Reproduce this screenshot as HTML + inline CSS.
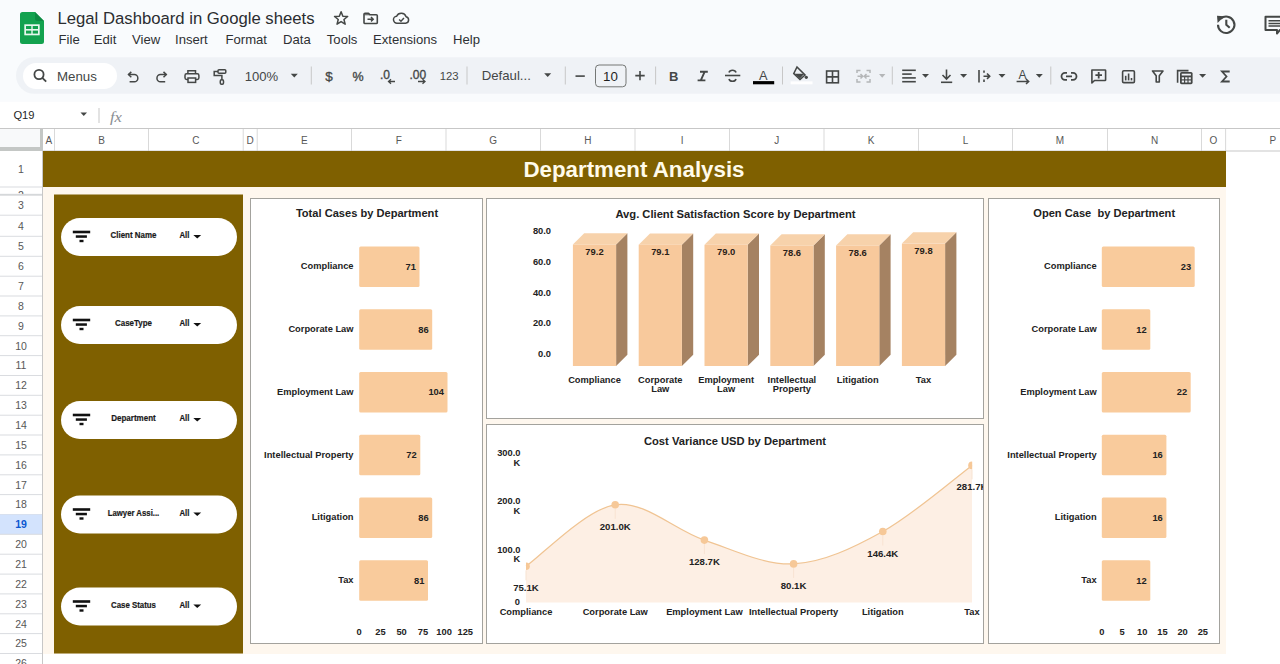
<!DOCTYPE html><html><head><meta charset="utf-8"><style>html,body{margin:0;padding:0;width:1280px;height:664px;overflow:hidden;background:#fff}</style></head><body><svg width="1280" height="664" viewBox="0 0 1280 664" style="display:block;font-family:'Liberation Sans', sans-serif"><rect x="0" y="0" width="1280" height="664" fill="#ffffff"/><rect x="0" y="0" width="1280" height="128" fill="#f9fbfd"/><g transform="translate(20,12)"><path d="M2.5 0 H15 L24 9 V29.5 A2.5 2.5 0 0 1 21.5 32 H2.5 A2.5 2.5 0 0 1 0 29.5 V2.5 A2.5 2.5 0 0 1 2.5 0Z" fill="#13a24f"/><path d="M15 0 L24 9 H17.5 A2.5 2.5 0 0 1 15 6.5Z" fill="#0d8a42"/><rect x="4.3" y="12.3" width="15.4" height="11" fill="#e8f7ee"/><rect x="6" y="14" width="5.3" height="3" fill="#13a24f"/><rect x="12.7" y="14" width="5.3" height="3" fill="#13a24f"/><rect x="6" y="18.6" width="5.3" height="3" fill="#13a24f"/><rect x="12.7" y="18.6" width="5.3" height="3" fill="#13a24f"/></g><text x="57.5" y="24.3" font-size="16.7" fill="#2b2d30">Legal Dashboard in Google sheets</text><path d="M341.10 11.70 L342.86 16.17 L347.66 16.47 L343.95 19.53 L345.16 24.18 L341.10 21.60 L337.04 24.18 L338.25 19.53 L334.54 16.47 L339.34 16.17Z" fill="none" stroke="#444746" stroke-width="1.5" stroke-linejoin="round"/><g fill="none" stroke="#444746" stroke-width="1.6"><path d="M364 14.2 A1 1 0 0 1 365 13.3 H368.5 L370 14.8 H376.3 A1 1 0 0 1 377.3 15.8 V22.6 A1 1 0 0 1 376.3 23.5 H365 A1 1 0 0 1 364 22.6Z" stroke-linejoin="round"/></g><path d="M364.3 14.3 H369 L370 15.3 H364.3Z" fill="#444746"/><path d="M367.5 19.2 H373.2 M371 17 L373.2 19.2 L371 21.4" fill="none" stroke="#444746" stroke-width="1.5"/><g transform="translate(392.6,10.6) scale(0.93)" fill="none" stroke="#444746" stroke-width="1.6"><path d="M5 13.5 H14 A3.5 3.5 0 0 0 14.5 6.6 A5.5 5.5 0 0 0 4.3 6.1 A3.7 3.7 0 0 0 5 13.5Z"/><path d="M7 9.6 L9 11.4 L12.2 8"/></g><text x="58.6" y="43.9" font-size="13.1" fill="#2e3033">File</text><text x="93.8" y="43.9" font-size="13.1" fill="#2e3033">Edit</text><text x="132" y="43.9" font-size="13.1" fill="#2e3033">View</text><text x="175" y="43.9" font-size="13.1" fill="#2e3033">Insert</text><text x="225.5" y="43.9" font-size="13.1" fill="#2e3033">Format</text><text x="283" y="43.9" font-size="13.1" fill="#2e3033">Data</text><text x="326.8" y="43.9" font-size="13.1" fill="#2e3033">Tools</text><text x="373" y="43.9" font-size="13.1" fill="#2e3033">Extensions</text><text x="453" y="43.9" font-size="13.1" fill="#2e3033">Help</text><g transform="translate(1216.5,14.5)" fill="none" stroke="#444746" stroke-width="2.1"><path d="M4.2 4.2 A8.2 8.2 0 1 1 1.5 10.2"/><path d="M9.8 5.3 V10.2 L13.2 13.2"/></g><path d="M1217 15.8 L1224.3 16.3 L1217.6 23Z" fill="#444746"/><g fill="none" stroke="#444746" stroke-width="2"><path d="M1265.5 16.8 H1285 V30 H1280 L1277 33.5 V30 H1265.5Z" stroke-linejoin="round"/><path d="M1268.5 20.8 H1282 M1268.5 23.4 H1282 M1268.5 26 H1282" stroke-width="1.5"/></g><rect x="16" y="57.2" width="1300" height="36.6" rx="18.3" fill="#eff2f6"/><rect x="23" y="63" width="94" height="26" rx="13" fill="#ffffff"/><g fill="none" stroke="#444746" stroke-width="1.8"><circle cx="39" cy="74.5" r="4.6"/><path d="M42.3 77.8 L46.2 81.7"/></g><text x="57" y="80.8" font-size="13.3" fill="#444746">Menus</text><g fill="none" stroke="#444746" stroke-width="1.5"><path d="M128.5 74.6 H134.3 A3.55 3.55 0 0 1 134.3 81.7 H129.6"/><path d="M131.3 71.9 L128.5 74.6 L131.3 77.3"/></g><g fill="none" stroke="#444746" stroke-width="1.5"><path d="M166.3 74.6 H160.5 A3.55 3.55 0 0 0 160.5 81.7 H165.2"/><path d="M163.5 71.9 L166.3 74.6 L163.5 77.3"/></g><g fill="none" stroke="#444746" stroke-width="1.5"><path d="M187.9 73.6 V70.7 H195.5 V73.6"/><rect x="185" y="73.8" width="13.9" height="5.6" rx="1.6"/><rect x="188" y="78" width="7.6" height="4.4" fill="#eff2f6"/></g><g fill="none" stroke="#444746" stroke-width="1.5"><rect x="218" y="69.8" width="7.8" height="3.4" rx="1"/><path d="M218 71.5 H214.2 V75.6 H221.9 V79.6"/><rect x="220.3" y="79.7" width="3.2" height="4.6" rx="1.2"/></g><text x="244.7" y="81.2" font-size="13.1" fill="#444746">100%</text><path d="M290.8 73.7 L297.8 73.7 L294.3 77.5Z" fill="#444746"/><rect x="310.8" y="66.5" width="1" height="18" fill="#c7c7c7"/><text x="329" y="80.5" font-size="13.5" fill="#444746" stroke="#444746" stroke-width="0.3" text-anchor="middle">$</text><text x="358" y="80.5" font-size="12.5" fill="#444746" stroke="#444746" stroke-width="0.35" text-anchor="middle">%</text><text x="380" y="79" font-size="12" fill="#444746" stroke="#444746" stroke-width="0.35">.0</text><path d="M388.5 81.5 H395 M391 79.3 L388.5 81.5 L391 83.7" fill="none" stroke="#444746" stroke-width="1.3"/><text x="409.5" y="79" font-size="12" fill="#444746" stroke="#444746" stroke-width="0.35">.00</text><path d="M418 81.5 H425 M422.5 79.3 L425 81.5 L422.5 83.7" fill="none" stroke="#444746" stroke-width="1.3"/><text x="439.8" y="80.3" font-size="11.3" fill="#444746">123</text><rect x="466.5" y="66.5" width="1" height="18" fill="#c7c7c7"/><text x="481.7" y="80.3" font-size="13.2" fill="#444746">Defaul...</text><path d="M544.2 73.2 L551.2 73.2 L547.7 77Z" fill="#444746"/><rect x="564.8" y="66.5" width="1" height="18" fill="#c7c7c7"/><rect x="575.5" y="75.3" width="9.3" height="1.6" fill="#444746"/><rect x="595.5" y="65" width="30.5" height="21.8" rx="3.5" fill="none" stroke="#747775" stroke-width="1"/><text x="610.5" y="81" font-size="13.3" fill="#1f1f1f" text-anchor="middle">10</text><path d="M635.3 75.6 H644.7 M640 71 V80.2" stroke="#444746" stroke-width="1.6"/><rect x="655.1" y="66.5" width="1" height="18" fill="#c7c7c7"/><text x="673.7" y="80.8" font-size="13" font-weight="bold" fill="#444746" text-anchor="middle">B</text><path d="M700 71.8 H707.8 M697.6 80.4 H705.4 M704.6 71.8 L700.8 80.4" fill="none" stroke="#444746" stroke-width="1.9"/><g fill="none" stroke="#444746" stroke-width="1.6"><path d="M725 75.5 H740.3"/><path d="M736 72.5 A3.6 3 0 0 0 729 72.5 M729 79 A3.6 3 0 0 0 736 79"/></g><text x="763.3" y="79.8" font-size="12.8" fill="#444746" text-anchor="middle">A</text><rect x="753" y="81.1" width="21.2" height="3.2" fill="#000000"/><rect x="782.0" y="66.5" width="1" height="18" fill="#c7c7c7"/><g fill="#444746"><path d="M797 67 L805 75 L800 79.5 L793.8 73.5Z" fill="none" stroke="#444746" stroke-width="1.6"/><path d="M794.5 73.8 H804.3 L800 78.5Z"/><circle cx="806.3" cy="77.3" r="1.6"/></g><rect x="790.6" y="81.4" width="21.9" height="2.9" fill="#ffffff"/><g fill="none" stroke="#444746" stroke-width="1.6"><rect x="826.6" y="71" width="11.8" height="11.8"/><path d="M832.5 71 V82.8 M826.6 76.9 H838.4"/></g><g fill="none" stroke="#b4b6b8" stroke-width="1.5"><path d="M857 73 V70.5 H860.5 M857 79 V82 H860.5 M870 73 V70.5 H866.5 M870 79 V82 H866.5"/><path d="M857.5 76.3 H862.5 M860.5 74 L862.7 76.3 L860.5 78.5 M869.5 76.3 H864.5 M866.5 74 L864.3 76.3 L866.5 78.5"/></g><path d="M879.0 74.0 L885.4000000000001 74.0 L882.2 77.8Z" fill="#b4b6b8"/><rect x="891.8" y="66.5" width="1" height="18" fill="#c7c7c7"/><g fill="#444746"><rect x="902.2" y="69.5" width="13.6" height="1.6"/><rect x="902.2" y="73.3" width="9.5" height="1.6"/><rect x="902.2" y="77.1" width="13.6" height="1.6"/><rect x="902.2" y="80.9" width="13.6" height="1.6"/></g><path d="M922.0 74.0 L929.0 74.0 L925.5 77.8Z" fill="#444746"/><g fill="none" stroke="#444746" stroke-width="1.6"><path d="M946.5 69.5 V79 M942.5 75 L946.5 79 L950.5 75"/><path d="M941 82.3 H952.2"/></g><path d="M960.1 74.0 L967.1 74.0 L963.6 77.8Z" fill="#444746"/><g fill="none" stroke="#444746" stroke-width="1.6"><path d="M979 70 V82.5"/><path d="M983.5 76.2 H989.5 M987 73.5 L989.7 76.2 L987 78.9"/><path d="M984 70.5 V72.8 M984 79.6 V82"/></g><path d="M998.5 74.0 L1005.5 74.0 L1002 77.8Z" fill="#444746"/><text x="1022.5" y="79" font-size="12" fill="#444746" text-anchor="middle">A</text><path d="M1016.6 81.5 H1028.5 M1026 79 L1028.7 81.5 L1026 84" fill="none" stroke="#444746" stroke-width="1.5"/><path d="M1035.8 74.0 L1042.8 74.0 L1039.3 77.8Z" fill="#444746"/><rect x="1050.3" y="66.5" width="1" height="18" fill="#c7c7c7"/><g fill="none" stroke="#444746" stroke-width="1.8"><path d="M1067 72.8 H1065 A3.5 3.5 0 0 0 1065 79.8 H1067 M1071 72.8 H1073 A3.5 3.5 0 0 1 1073 79.8 H1071 M1066 76.3 H1072"/></g><g fill="none" stroke="#444746" stroke-width="1.6"><path d="M1091.9 70 H1105 A0.6 0.6 0 0 1 1105.6 70.6 V79.9 A0.6 0.6 0 0 1 1105 80.5 H1094.5 L1091.9 83 Z" stroke-linejoin="round"/><path d="M1098.7 71.9 V78.5 M1095.4 75.2 H1102" stroke-width="1.8"/></g><g fill="none" stroke="#444746" stroke-width="1.6"><rect x="1122.6" y="70.8" width="11.8" height="11.8" rx="1.2"/></g><g fill="#444746"><rect x="1124.9" y="75.8" width="1.6" height="4.6"/><rect x="1127.8" y="73.5" width="1.6" height="6.9"/><rect x="1130.7" y="78" width="1.6" height="2.4"/></g><path d="M1152.5 71 H1163 L1159.3 75.8 V82 H1156.2 V75.8Z" fill="none" stroke="#444746" stroke-width="1.6" stroke-linejoin="round"/><path d="M1177.6 82.8 V70.6 H1188.5" fill="none" stroke="#444746" stroke-width="1.6"/><rect x="1180" y="72" width="12.6" height="12.2" rx="1.6" fill="#444746"/><g fill="#eff2f6"><rect x="1181.7" y="73.7" width="9.2" height="1.8"/><rect x="1181.8" y="77.3" width="2.2" height="2"/><rect x="1185.2" y="77.3" width="2.2" height="2"/><rect x="1188.6" y="77.3" width="2.2" height="2"/><rect x="1181.8" y="80.5" width="2.2" height="2"/><rect x="1185.2" y="80.5" width="2.2" height="2"/><rect x="1188.6" y="80.5" width="2.2" height="2"/></g><path d="M1199.1 74.0 L1206.1 74.0 L1202.6 77.8Z" fill="#444746"/><path d="M1229.7 71.5 H1222 L1226.5 76.5 L1222 81.5 H1229.7" fill="none" stroke="#444746" stroke-width="1.8"/><rect x="0" y="101.8" width="1280" height="26.2" fill="#ffffff"/><text x="13.4" y="118.5" font-size="11.2" fill="#1f1f1f">Q19</text><path d="M80.5 112.5 H87 L83.75 116Z" fill="#444746"/><rect x="98.5" y="108" width="1" height="15" fill="#c7c7c7"/><text x="110" y="121.5" font-size="15.5" font-style="italic" font-family="Liberation Serif" fill="#8a8e93" textLength="12" lengthAdjust="spacingAndGlyphs">fx</text><rect x="0" y="128" width="1280" height="1" fill="#c7c7c7"/><rect x="0" y="129" width="40" height="18" fill="#f8f9fa"/><rect x="0" y="147" width="43" height="4" fill="#c4c7c5"/><rect x="40" y="129" width="3" height="22" fill="#c4c7c5"/><rect x="54.0" y="129" width="1" height="22" fill="#d9d9d9"/><text x="48.8" y="143.6" font-size="10" fill="#575757" text-anchor="middle">A</text><rect x="148.0" y="129" width="1" height="22" fill="#d9d9d9"/><text x="101.5" y="143.6" font-size="10" fill="#575757" text-anchor="middle">B</text><rect x="242.7" y="129" width="1" height="22" fill="#d9d9d9"/><text x="195.8" y="143.6" font-size="10" fill="#575757" text-anchor="middle">C</text><rect x="256.7" y="129" width="1" height="22" fill="#d9d9d9"/><text x="250.2" y="143.6" font-size="10" fill="#575757" text-anchor="middle">D</text><rect x="351.0" y="129" width="1" height="22" fill="#d9d9d9"/><text x="304.4" y="143.6" font-size="10" fill="#575757" text-anchor="middle">E</text><rect x="445.5" y="129" width="1" height="22" fill="#d9d9d9"/><text x="398.8" y="143.6" font-size="10" fill="#575757" text-anchor="middle">F</text><rect x="540.0" y="129" width="1" height="22" fill="#d9d9d9"/><text x="493.2" y="143.6" font-size="10" fill="#575757" text-anchor="middle">G</text><rect x="634.5" y="129" width="1" height="22" fill="#d9d9d9"/><text x="587.8" y="143.6" font-size="10" fill="#575757" text-anchor="middle">H</text><rect x="729.0" y="129" width="1" height="22" fill="#d9d9d9"/><text x="682.2" y="143.6" font-size="10" fill="#575757" text-anchor="middle">I</text><rect x="823.5" y="129" width="1" height="22" fill="#d9d9d9"/><text x="776.8" y="143.6" font-size="10" fill="#575757" text-anchor="middle">J</text><rect x="918.0" y="129" width="1" height="22" fill="#d9d9d9"/><text x="871.2" y="143.6" font-size="10" fill="#575757" text-anchor="middle">K</text><rect x="1012.0" y="129" width="1" height="22" fill="#d9d9d9"/><text x="965.5" y="143.6" font-size="10" fill="#575757" text-anchor="middle">L</text><rect x="1107.0" y="129" width="1" height="22" fill="#d9d9d9"/><text x="1060.0" y="143.6" font-size="10" fill="#575757" text-anchor="middle">M</text><rect x="1201.0" y="129" width="1" height="22" fill="#d9d9d9"/><text x="1154.5" y="143.6" font-size="10" fill="#575757" text-anchor="middle">N</text><rect x="1225.1" y="129" width="1" height="22" fill="#d9d9d9"/><text x="1213.5" y="143.6" font-size="10" fill="#575757" text-anchor="middle">O</text><rect x="1319.5" y="129" width="1" height="22" fill="#d9d9d9"/><text x="1272.8" y="143.6" font-size="10" fill="#575757" text-anchor="middle">P</text><rect x="43" y="150.5" width="1240" height="1" fill="#c7c7c7"/><rect x="0" y="186.5" width="42" height="1" fill="#dadce0"/><text x="21" y="172.8" font-size="10.5" fill="#575757" text-anchor="middle">1</text><rect x="0" y="193.8" width="42" height="1" fill="#dadce0"/><clipPath id="r2"><rect x="0" y="187" width="42" height="7.1"/></clipPath><text x="21" y="199.1" font-size="10.5" fill="#575757" text-anchor="middle" clip-path="url(#r2)">2</text><rect x="0" y="214.7" width="42" height="1" fill="#dadce0"/><text x="21" y="208.6" font-size="10.5" fill="#575757" text-anchor="middle">3</text><rect x="0" y="235.8" width="42" height="1" fill="#dadce0"/><text x="21" y="229.6" font-size="10.5" fill="#575757" text-anchor="middle">4</text><rect x="0" y="255.8" width="42" height="1" fill="#dadce0"/><text x="21" y="250.1" font-size="10.5" fill="#575757" text-anchor="middle">5</text><rect x="0" y="275.7" width="42" height="1" fill="#dadce0"/><text x="21" y="270.0" font-size="10.5" fill="#575757" text-anchor="middle">6</text><rect x="0" y="295.5" width="42" height="1" fill="#dadce0"/><text x="21" y="289.9" font-size="10.5" fill="#575757" text-anchor="middle">7</text><rect x="0" y="315.4" width="42" height="1" fill="#dadce0"/><text x="21" y="309.8" font-size="10.5" fill="#575757" text-anchor="middle">8</text><rect x="0" y="335.2" width="42" height="1" fill="#dadce0"/><text x="21" y="329.6" font-size="10.5" fill="#575757" text-anchor="middle">9</text><rect x="0" y="355.1" width="42" height="1" fill="#dadce0"/><text x="21" y="349.5" font-size="10.5" fill="#575757" text-anchor="middle">10</text><rect x="0" y="375.0" width="42" height="1" fill="#dadce0"/><text x="21" y="369.3" font-size="10.5" fill="#575757" text-anchor="middle">11</text><rect x="0" y="394.8" width="42" height="1" fill="#dadce0"/><text x="21" y="389.2" font-size="10.5" fill="#575757" text-anchor="middle">12</text><rect x="0" y="414.7" width="42" height="1" fill="#dadce0"/><text x="21" y="409.1" font-size="10.5" fill="#575757" text-anchor="middle">13</text><rect x="0" y="434.5" width="42" height="1" fill="#dadce0"/><text x="21" y="428.9" font-size="10.5" fill="#575757" text-anchor="middle">14</text><rect x="0" y="454.4" width="42" height="1" fill="#dadce0"/><text x="21" y="448.8" font-size="10.5" fill="#575757" text-anchor="middle">15</text><rect x="0" y="474.3" width="42" height="1" fill="#dadce0"/><text x="21" y="468.6" font-size="10.5" fill="#575757" text-anchor="middle">16</text><rect x="0" y="494.1" width="42" height="1" fill="#dadce0"/><text x="21" y="488.5" font-size="10.5" fill="#575757" text-anchor="middle">17</text><rect x="0" y="514.0" width="42" height="1" fill="#dadce0"/><text x="21" y="508.4" font-size="10.5" fill="#575757" text-anchor="middle">18</text><rect x="0" y="514.5" width="42" height="19.9" fill="#d3e3fd"/><rect x="0" y="533.8" width="42" height="1" fill="#dadce0"/><text x="21" y="528.2" font-size="10.5" font-weight="bold" fill="#0b57d0" text-anchor="middle">19</text><rect x="0" y="553.7" width="42" height="1" fill="#dadce0"/><text x="21" y="548.1" font-size="10.5" fill="#575757" text-anchor="middle">20</text><rect x="0" y="573.6" width="42" height="1" fill="#dadce0"/><text x="21" y="567.9" font-size="10.5" fill="#575757" text-anchor="middle">21</text><rect x="0" y="593.4" width="42" height="1" fill="#dadce0"/><text x="21" y="587.8" font-size="10.5" fill="#575757" text-anchor="middle">22</text><rect x="0" y="613.3" width="42" height="1" fill="#dadce0"/><text x="21" y="607.6" font-size="10.5" fill="#575757" text-anchor="middle">23</text><rect x="0" y="633.1" width="42" height="1" fill="#dadce0"/><text x="21" y="627.5" font-size="10.5" fill="#575757" text-anchor="middle">24</text><rect x="0" y="653.0" width="42" height="1" fill="#dadce0"/><text x="21" y="647.4" font-size="10.5" fill="#575757" text-anchor="middle">25</text><rect x="0" y="672.9" width="42" height="1" fill="#dadce0"/><text x="21" y="667.2" font-size="10.5" fill="#575757" text-anchor="middle">26</text><rect x="0" y="194.1" width="42" height="1.6" fill="#d4d6d9"/><rect x="42" y="151" width="1" height="520" fill="#c7c7c7"/><rect x="43" y="151" width="1183" height="36" fill="#7f6000"/><rect x="43" y="187" width="1183" height="467" fill="#fef7ee"/><text x="634" y="177.3" font-size="22.3" font-weight="bold" fill="#fffbea" text-anchor="middle">Department Analysis</text><rect x="54" y="194.5" width="189" height="459" fill="#7f6000"/><rect x="61" y="218" width="176" height="38" rx="19" fill="#ffffff"/><rect x="72.8" y="230.7" width="17.4" height="2.6" fill="#111"/><rect x="75.8" y="235.3" width="11.1" height="2.5" fill="#111"/><rect x="79.5" y="239.8" width="4" height="2.4" fill="#111"/><text x="133.5" y="238.4" font-size="9.2" font-weight="bold" fill="#1a1a1a" stroke="#1a1a1a" stroke-width="0.2" text-anchor="middle" textLength="46" lengthAdjust="spacingAndGlyphs">Client Name</text><text x="179.4" y="238.4" font-size="8.8" font-weight="bold" fill="#1a1a1a" stroke="#1a1a1a" stroke-width="0.2" textLength="10" lengthAdjust="spacingAndGlyphs">All</text><path d="M193.3 234.9 H201.2 L197.25 238.5Z" fill="#111"/><rect x="61" y="306" width="176" height="38" rx="19" fill="#ffffff"/><rect x="72.8" y="318.7" width="17.4" height="2.6" fill="#111"/><rect x="75.8" y="323.3" width="11.1" height="2.5" fill="#111"/><rect x="79.5" y="327.8" width="4" height="2.4" fill="#111"/><text x="133.5" y="326.4" font-size="9.2" font-weight="bold" fill="#1a1a1a" stroke="#1a1a1a" stroke-width="0.2" text-anchor="middle" textLength="37" lengthAdjust="spacingAndGlyphs">CaseType</text><text x="179.4" y="326.4" font-size="8.8" font-weight="bold" fill="#1a1a1a" stroke="#1a1a1a" stroke-width="0.2" textLength="10" lengthAdjust="spacingAndGlyphs">All</text><path d="M193.3 322.9 H201.2 L197.25 326.5Z" fill="#111"/><rect x="61" y="401" width="176" height="38" rx="19" fill="#ffffff"/><rect x="72.8" y="413.7" width="17.4" height="2.6" fill="#111"/><rect x="75.8" y="418.3" width="11.1" height="2.5" fill="#111"/><rect x="79.5" y="422.8" width="4" height="2.4" fill="#111"/><text x="133.5" y="421.4" font-size="9.2" font-weight="bold" fill="#1a1a1a" stroke="#1a1a1a" stroke-width="0.2" text-anchor="middle" textLength="44.6" lengthAdjust="spacingAndGlyphs">Department</text><text x="179.4" y="421.4" font-size="8.8" font-weight="bold" fill="#1a1a1a" stroke="#1a1a1a" stroke-width="0.2" textLength="10" lengthAdjust="spacingAndGlyphs">All</text><path d="M193.3 417.9 H201.2 L197.25 421.5Z" fill="#111"/><rect x="61" y="495.5" width="176" height="38" rx="19" fill="#ffffff"/><rect x="72.8" y="508.2" width="17.4" height="2.6" fill="#111"/><rect x="75.8" y="512.8" width="11.1" height="2.5" fill="#111"/><rect x="79.5" y="517.3" width="4" height="2.4" fill="#111"/><text x="133.5" y="515.9" font-size="9.2" font-weight="bold" fill="#1a1a1a" stroke="#1a1a1a" stroke-width="0.2" text-anchor="middle" textLength="51.6" lengthAdjust="spacingAndGlyphs">Lawyer Assi...</text><text x="179.4" y="515.9" font-size="8.8" font-weight="bold" fill="#1a1a1a" stroke="#1a1a1a" stroke-width="0.2" textLength="10" lengthAdjust="spacingAndGlyphs">All</text><path d="M193.3 512.4 H201.2 L197.25 516.0Z" fill="#111"/><rect x="61" y="587.5" width="176" height="38" rx="19" fill="#ffffff"/><rect x="72.8" y="600.2" width="17.4" height="2.6" fill="#111"/><rect x="75.8" y="604.8" width="11.1" height="2.5" fill="#111"/><rect x="79.5" y="609.3" width="4" height="2.4" fill="#111"/><text x="133.5" y="607.9" font-size="9.2" font-weight="bold" fill="#1a1a1a" stroke="#1a1a1a" stroke-width="0.2" text-anchor="middle" textLength="45" lengthAdjust="spacingAndGlyphs">Case Status</text><text x="179.4" y="607.9" font-size="8.8" font-weight="bold" fill="#1a1a1a" stroke="#1a1a1a" stroke-width="0.2" textLength="10" lengthAdjust="spacingAndGlyphs">All</text><path d="M193.3 604.4 H201.2 L197.25 608.0Z" fill="#111"/><rect x="250.5" y="198.5" width="232" height="445" fill="#ffffff" stroke="#a3a29d" stroke-width="1"/><rect x="486.5" y="198.5" width="497" height="220" fill="#ffffff" stroke="#a3a29d" stroke-width="1"/><rect x="486.5" y="424.5" width="497" height="219" fill="#ffffff" stroke="#a3a29d" stroke-width="1"/><rect x="988.5" y="198.5" width="231" height="445" fill="#ffffff" stroke="#a3a29d" stroke-width="1"/><text x="367" y="217" font-size="11.1" font-weight="bold" fill="#222222" text-anchor="middle">Total Cases by Department</text><rect x="359.2" y="246.6" width="60.3" height="40.5" rx="1.5" fill="#f9cb9c"/><text x="415.9" y="269.9" font-size="9.3" font-weight="bold" fill="#222222" text-anchor="end">71</text><text x="353.5" y="269.3" font-size="9.3" font-weight="bold" fill="#222222" text-anchor="end">Compliance</text><rect x="359.2" y="309.35" width="73.0" height="40.5" rx="1.5" fill="#f9cb9c"/><text x="428.6" y="332.7" font-size="9.3" font-weight="bold" fill="#222222" text-anchor="end">86</text><text x="353.5" y="332.1" font-size="9.3" font-weight="bold" fill="#222222" text-anchor="end">Corporate Law</text><rect x="359.2" y="372.1" width="88.3" height="40.5" rx="1.5" fill="#f9cb9c"/><text x="443.9" y="395.4" font-size="9.3" font-weight="bold" fill="#222222" text-anchor="end">104</text><text x="353.5" y="394.8" font-size="9.3" font-weight="bold" fill="#222222" text-anchor="end">Employment Law</text><rect x="359.2" y="434.85" width="61.1" height="40.5" rx="1.5" fill="#f9cb9c"/><text x="416.7" y="458.2" font-size="9.3" font-weight="bold" fill="#222222" text-anchor="end">72</text><text x="353.5" y="457.6" font-size="9.3" font-weight="bold" fill="#222222" text-anchor="end">Intellectual Property</text><rect x="359.2" y="497.6" width="73.0" height="40.5" rx="1.5" fill="#f9cb9c"/><text x="428.6" y="520.9" font-size="9.3" font-weight="bold" fill="#222222" text-anchor="end">86</text><text x="353.5" y="520.3" font-size="9.3" font-weight="bold" fill="#222222" text-anchor="end">Litigation</text><rect x="359.2" y="560.35" width="68.8" height="40.5" rx="1.5" fill="#f9cb9c"/><text x="424.4" y="583.6" font-size="9.3" font-weight="bold" fill="#222222" text-anchor="end">81</text><text x="353.5" y="583.1" font-size="9.3" font-weight="bold" fill="#222222" text-anchor="end">Tax</text><text x="359.2" y="634.5" font-size="9.3" font-weight="bold" fill="#222222" text-anchor="middle">0</text><text x="380.4" y="634.5" font-size="9.3" font-weight="bold" fill="#222222" text-anchor="middle">25</text><text x="401.6" y="634.5" font-size="9.3" font-weight="bold" fill="#222222" text-anchor="middle">50</text><text x="422.9" y="634.5" font-size="9.3" font-weight="bold" fill="#222222" text-anchor="middle">75</text><text x="444.1" y="634.5" font-size="9.3" font-weight="bold" fill="#222222" text-anchor="middle">100</text><text x="465.3" y="634.5" font-size="9.3" font-weight="bold" fill="#222222" text-anchor="middle">125</text><text x="1104.2" y="217" font-size="11.1" font-weight="bold" fill="#222222" text-anchor="middle">Open Case&#160; by Department</text><rect x="1101.8" y="246.6" width="92.9" height="40.5" rx="1.5" fill="#f9cb9c"/><text x="1191.1" y="269.9" font-size="9.3" font-weight="bold" fill="#222222" text-anchor="end">23</text><text x="1096.7" y="269.3" font-size="9.3" font-weight="bold" fill="#222222" text-anchor="end">Compliance</text><rect x="1101.8" y="309.35" width="48.5" height="40.5" rx="1.5" fill="#f9cb9c"/><text x="1146.7" y="332.7" font-size="9.3" font-weight="bold" fill="#222222" text-anchor="end">12</text><text x="1096.7" y="332.1" font-size="9.3" font-weight="bold" fill="#222222" text-anchor="end">Corporate Law</text><rect x="1101.8" y="372.1" width="88.9" height="40.5" rx="1.5" fill="#f9cb9c"/><text x="1187.1" y="395.4" font-size="9.3" font-weight="bold" fill="#222222" text-anchor="end">22</text><text x="1096.7" y="394.8" font-size="9.3" font-weight="bold" fill="#222222" text-anchor="end">Employment Law</text><rect x="1101.8" y="434.85" width="64.6" height="40.5" rx="1.5" fill="#f9cb9c"/><text x="1162.8" y="458.2" font-size="9.3" font-weight="bold" fill="#222222" text-anchor="end">16</text><text x="1096.7" y="457.6" font-size="9.3" font-weight="bold" fill="#222222" text-anchor="end">Intellectual Property</text><rect x="1101.8" y="497.6" width="64.6" height="40.5" rx="1.5" fill="#f9cb9c"/><text x="1162.8" y="520.9" font-size="9.3" font-weight="bold" fill="#222222" text-anchor="end">16</text><text x="1096.7" y="520.3" font-size="9.3" font-weight="bold" fill="#222222" text-anchor="end">Litigation</text><rect x="1101.8" y="560.35" width="48.5" height="40.5" rx="1.5" fill="#f9cb9c"/><text x="1146.7" y="583.6" font-size="9.3" font-weight="bold" fill="#222222" text-anchor="end">12</text><text x="1096.7" y="583.1" font-size="9.3" font-weight="bold" fill="#222222" text-anchor="end">Tax</text><text x="1101.8" y="634.5" font-size="9.3" font-weight="bold" fill="#222222" text-anchor="middle">0</text><text x="1122.0" y="634.5" font-size="9.3" font-weight="bold" fill="#222222" text-anchor="middle">5</text><text x="1142.2" y="634.5" font-size="9.3" font-weight="bold" fill="#222222" text-anchor="middle">10</text><text x="1162.4" y="634.5" font-size="9.3" font-weight="bold" fill="#222222" text-anchor="middle">15</text><text x="1182.6" y="634.5" font-size="9.3" font-weight="bold" fill="#222222" text-anchor="middle">20</text><text x="1202.8" y="634.5" font-size="9.3" font-weight="bold" fill="#222222" text-anchor="middle">25</text><text x="735.5" y="218.4" font-size="11.2" font-weight="bold" fill="#222222" text-anchor="middle">Avg. Client Satisfaction Score by Department</text><text x="551" y="234.2" font-size="9.3" font-weight="bold" fill="#222222" text-anchor="end">80.0</text><text x="551" y="264.9" font-size="9.3" font-weight="bold" fill="#222222" text-anchor="end">60.0</text><text x="551" y="295.7" font-size="9.3" font-weight="bold" fill="#222222" text-anchor="end">40.0</text><text x="551" y="326.4" font-size="9.3" font-weight="bold" fill="#222222" text-anchor="end">20.0</text><text x="551" y="357.2" font-size="9.3" font-weight="bold" fill="#222222" text-anchor="end">0.0</text><path d="M616.1 244.5 L627.4 233.2 L627.4 354.7 L616.1 366.0Z" fill="#a58262"/><path d="M572.9 244.5 L584.2 233.2 L627.4 233.2 L616.1 244.5Z" fill="#f7d2ab"/><rect x="572.9" y="244.5" width="43.2" height="121.5" fill="#f8c99c"/><text x="594.5" y="254.8" font-size="9.4" font-weight="bold" fill="#2a2118" text-anchor="middle" textLength="18.3" lengthAdjust="spacingAndGlyphs">79.2</text><text x="594.5" y="382.7" font-size="9.3" font-weight="bold" fill="#222222" text-anchor="middle">Compliance</text><path d="M681.9 244.7 L693.2 233.4 L693.2 354.7 L681.9 366.0Z" fill="#a58262"/><path d="M638.7 244.7 L650.0 233.4 L693.2 233.4 L681.9 244.7Z" fill="#f7d2ab"/><rect x="638.7" y="244.7" width="43.2" height="121.3" fill="#f8c99c"/><text x="660.3" y="255.0" font-size="9.4" font-weight="bold" fill="#2a2118" text-anchor="middle" textLength="18.3" lengthAdjust="spacingAndGlyphs">79.1</text><text x="660.3" y="382.7" font-size="9.3" font-weight="bold" fill="#222222" text-anchor="middle">Corporate</text><text x="660.3" y="391.7" font-size="9.3" font-weight="bold" fill="#222222" text-anchor="middle">Law</text><path d="M747.7 244.8 L759.0 233.5 L759.0 354.7 L747.7 366.0Z" fill="#a58262"/><path d="M704.5 244.8 L715.8 233.5 L759.0 233.5 L747.7 244.8Z" fill="#f7d2ab"/><rect x="704.5" y="244.8" width="43.2" height="121.2" fill="#f8c99c"/><text x="726.1" y="255.1" font-size="9.4" font-weight="bold" fill="#2a2118" text-anchor="middle" textLength="18.3" lengthAdjust="spacingAndGlyphs">79.0</text><text x="726.1" y="382.7" font-size="9.3" font-weight="bold" fill="#222222" text-anchor="middle">Employment</text><text x="726.1" y="391.7" font-size="9.3" font-weight="bold" fill="#222222" text-anchor="middle">Law</text><path d="M813.5 245.5 L824.8 234.2 L824.8 354.7 L813.5 366.0Z" fill="#a58262"/><path d="M770.3 245.5 L781.6 234.2 L824.8 234.2 L813.5 245.5Z" fill="#f7d2ab"/><rect x="770.3" y="245.5" width="43.2" height="120.5" fill="#f8c99c"/><text x="791.9" y="255.8" font-size="9.4" font-weight="bold" fill="#2a2118" text-anchor="middle" textLength="18.3" lengthAdjust="spacingAndGlyphs">78.6</text><text x="791.9" y="382.7" font-size="9.3" font-weight="bold" fill="#222222" text-anchor="middle">Intellectual</text><text x="791.9" y="391.7" font-size="9.3" font-weight="bold" fill="#222222" text-anchor="middle">Property</text><path d="M879.3 245.5 L890.6 234.2 L890.6 354.7 L879.3 366.0Z" fill="#a58262"/><path d="M836.1 245.5 L847.4 234.2 L890.6 234.2 L879.3 245.5Z" fill="#f7d2ab"/><rect x="836.1" y="245.5" width="43.2" height="120.5" fill="#f8c99c"/><text x="857.7" y="255.8" font-size="9.4" font-weight="bold" fill="#2a2118" text-anchor="middle" textLength="18.3" lengthAdjust="spacingAndGlyphs">78.6</text><text x="857.7" y="382.7" font-size="9.3" font-weight="bold" fill="#222222" text-anchor="middle">Litigation</text><path d="M945.1 243.6 L956.4 232.3 L956.4 354.7 L945.1 366.0Z" fill="#a58262"/><path d="M901.9 243.6 L913.2 232.3 L956.4 232.3 L945.1 243.6Z" fill="#f7d2ab"/><rect x="901.9" y="243.6" width="43.2" height="122.4" fill="#f8c99c"/><text x="923.5" y="253.9" font-size="9.4" font-weight="bold" fill="#2a2118" text-anchor="middle" textLength="18.3" lengthAdjust="spacingAndGlyphs">79.8</text><text x="923.5" y="382.7" font-size="9.3" font-weight="bold" fill="#222222" text-anchor="middle">Tax</text><text x="735" y="444.6" font-size="11.2" font-weight="bold" fill="#222222" text-anchor="middle">Cost Variance USD by Department</text><text x="520.4" y="456.0" font-size="9.3" font-weight="bold" fill="#222222" text-anchor="end">300.0</text><text x="516.8" y="465.6" font-size="9.3" font-weight="bold" fill="#222222" text-anchor="middle">K</text><text x="520.4" y="504.1" font-size="9.3" font-weight="bold" fill="#222222" text-anchor="end">200.0</text><text x="516.8" y="513.7" font-size="9.3" font-weight="bold" fill="#222222" text-anchor="middle">K</text><text x="520.4" y="552.7" font-size="9.3" font-weight="bold" fill="#222222" text-anchor="end">100.0</text><text x="516.8" y="562.3" font-size="9.3" font-weight="bold" fill="#222222" text-anchor="middle">K</text><text x="517.4" y="605.2" font-size="9.3" font-weight="bold" fill="#222222" text-anchor="middle">0</text><path d="M526.0 566.3 C540.9 556.1 585.5 509.2 615.2 504.8 C644.9 500.4 674.7 530.3 704.4 540.1 C734.1 550.0 763.9 565.3 793.6 563.9 C823.3 562.4 853.1 547.9 882.8 531.5 C912.5 515.1 957.1 476.4 972.0 465.4 L972.0 602.5 L526.0 602.5Z" fill="#fdefe4"/><path d="M526.0 566.3 C540.9 556.1 585.5 509.2 615.2 504.8 C644.9 500.4 674.7 530.3 704.4 540.1 C734.1 550.0 763.9 565.3 793.6 563.9 C823.3 562.4 853.1 547.9 882.8 531.5 C912.5 515.1 957.1 476.4 972.0 465.4" fill="none" stroke="#f0c493" stroke-width="1.25"/><clipPath id="plot3"><rect x="526" y="440" width="446.2" height="170"/></clipPath><rect x="525.5" y="570.3" width="1" height="10" fill="#f8e3d2"/><circle cx="526.0" cy="566.3" r="3.8" fill="#f6c898" clip-path="url(#plot3)"/><text x="526.0" y="591.3" font-size="9.6" font-weight="bold" fill="#222222" text-anchor="middle">75.1K</text><text x="526.0" y="615.1" font-size="9.3" font-weight="bold" fill="#222222" text-anchor="middle">Compliance</text><rect x="614.7" y="508.8" width="1" height="10" fill="#f8e3d2"/><circle cx="615.2" cy="504.8" r="3.8" fill="#f6c898" clip-path="url(#plot3)"/><text x="615.2" y="529.8" font-size="9.6" font-weight="bold" fill="#222222" text-anchor="middle">201.0K</text><text x="615.2" y="615.1" font-size="9.3" font-weight="bold" fill="#222222" text-anchor="middle">Corporate Law</text><rect x="703.9" y="544.1" width="1" height="10" fill="#f8e3d2"/><circle cx="704.4" cy="540.1" r="3.8" fill="#f6c898" clip-path="url(#plot3)"/><text x="704.4" y="565.1" font-size="9.6" font-weight="bold" fill="#222222" text-anchor="middle">128.7K</text><text x="704.4" y="615.1" font-size="9.3" font-weight="bold" fill="#222222" text-anchor="middle">Employment Law</text><rect x="793.1" y="567.9" width="1" height="10" fill="#f8e3d2"/><circle cx="793.6" cy="563.9" r="3.8" fill="#f6c898" clip-path="url(#plot3)"/><text x="793.6" y="588.9" font-size="9.6" font-weight="bold" fill="#222222" text-anchor="middle">80.1K</text><text x="793.6" y="615.1" font-size="9.3" font-weight="bold" fill="#222222" text-anchor="middle">Intellectual Property</text><rect x="882.3" y="535.5" width="1" height="10" fill="#f8e3d2"/><circle cx="882.8" cy="531.5" r="3.8" fill="#f6c898" clip-path="url(#plot3)"/><text x="882.8" y="556.5" font-size="9.6" font-weight="bold" fill="#222222" text-anchor="middle">146.4K</text><text x="882.8" y="615.1" font-size="9.3" font-weight="bold" fill="#222222" text-anchor="middle">Litigation</text><rect x="971.5" y="469.4" width="1" height="10" fill="#f8e3d2"/><circle cx="972.0" cy="465.4" r="3.8" fill="#f6c898" clip-path="url(#plot3)"/><text x="972.0" y="490.4" font-size="9.6" font-weight="bold" fill="#222222" text-anchor="middle">281.7K</text><text x="972.0" y="615.1" font-size="9.3" font-weight="bold" fill="#222222" text-anchor="middle">Tax</text><rect x="983" y="470" width="5" height="30" fill="#fef7ee"/><rect x="983" y="470" width="1" height="30" fill="#a3a29d"/><rect x="988" y="470" width="1" height="30" fill="#a3a29d"/></svg></body></html>
